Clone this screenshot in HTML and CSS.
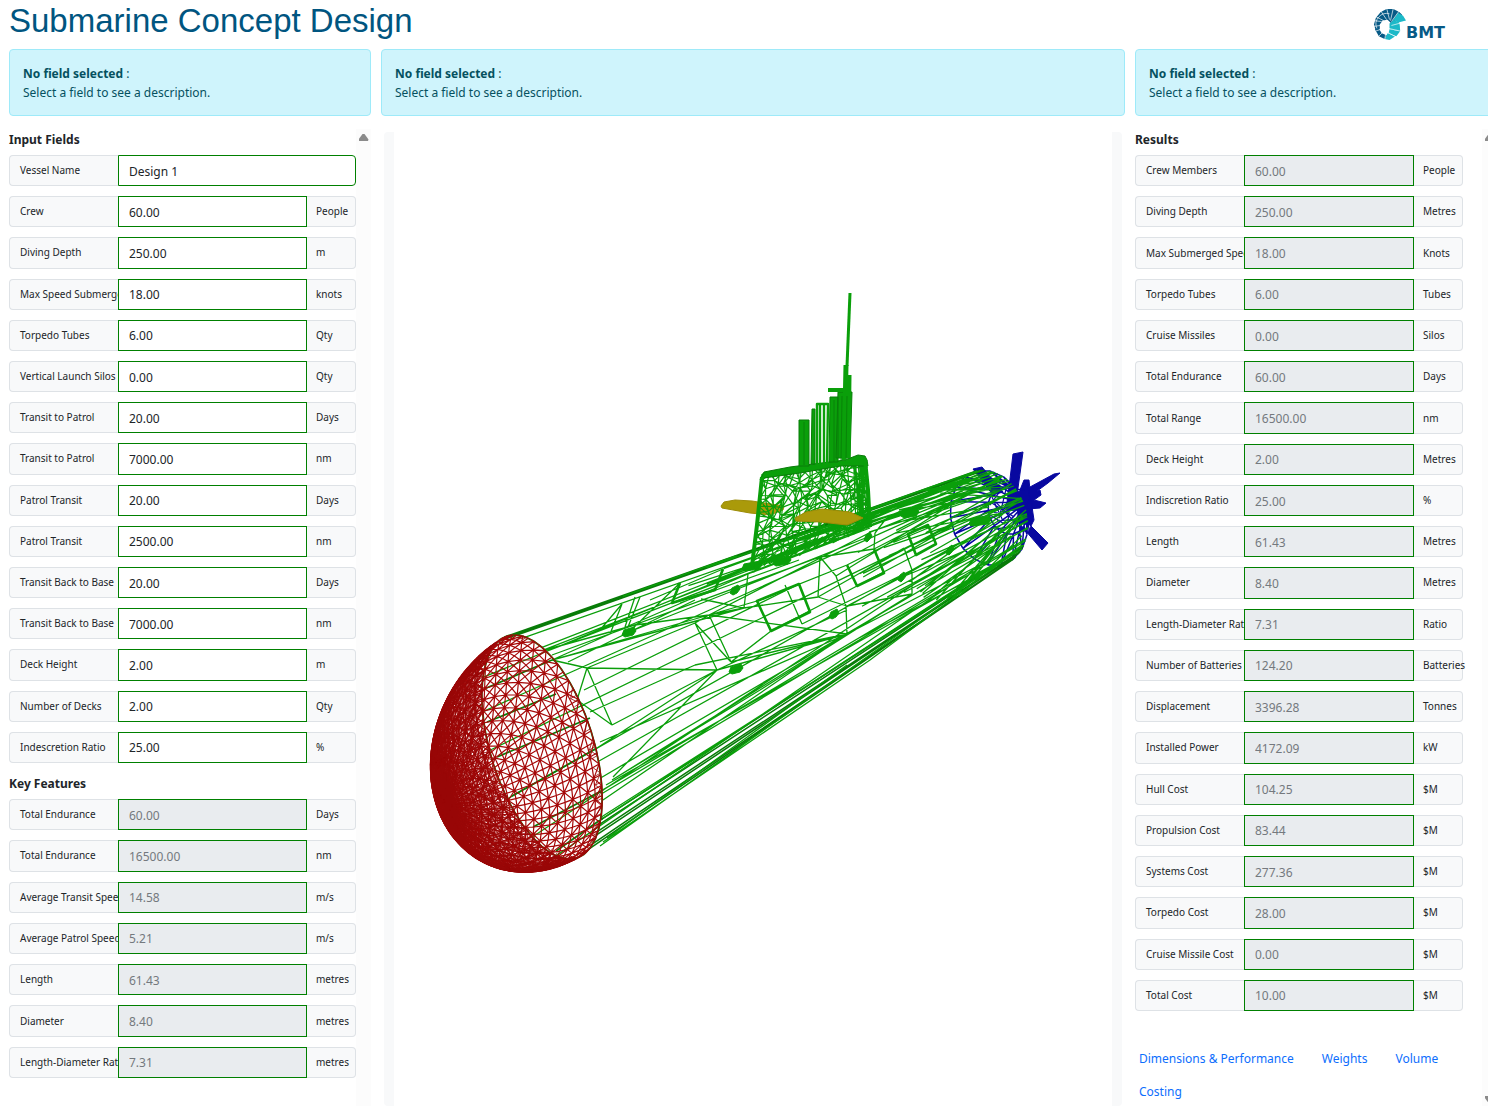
FILE: index.html
```html
<!DOCTYPE html>
<html lang="en">
<head>
<meta charset="utf-8">
<title>Submarine Concept Design</title>
<link rel="stylesheet" href="styles.css">
</head>
<body>
<header class="topbar">
  <h1>Submarine Concept Design</h1>
  <div class="logo">
    <svg class="logo-mark" viewBox="0 0 34 34" aria-hidden="true">
      <path d="M3 24 L1 17 L3 10 L8 4 L14 1 L21 1 L27 4 L30 7 L19 16 L15 12 L10 13 L7 17 L7 22 Z" fill="#075a86"/>
      <path d="M26 5 L31 8 L34 13 L26 15 L21 12 Z M21 13 L27 16 L28 23 L17 21 L17 16 Z M17 22 L28 24 L24 29 L16 26 Z" fill="#1cb9c8"/>
      <path d="M19 15 L21 12 L27 15 L28 24 L17 22 Z M15 26 L23 29 L17 33 L12 32 Z" fill="#1cb9c8"/>
      <path d="M2 22 L6 21 L9 26 L14 28 L12 32 L6 29 Z" fill="#075a86"/>
      <path d="M0 19 L8 18 M1 13 L9 14 M3 9 L11 13 M8 3 L14 12 M14 0 L17 12 M21 0 L18 13 M27 3 L19 14 M34 14 L19 18 M29 24 L16 21 M24 30 L15 25 M2 24 L8 22 M6 29 L10 25 M12 33 L13 27 M4 21 A11 11 0 0 1 17 6" fill="none" stroke="#fff" stroke-width=".7"/>
    </svg>
    <span class="logo-name">BMT</span>
  </div>
</header>
<main class="columns">
  <div class="alert"><strong>No field selected</strong> :<br>Select a field to see a description.</div>
  <div class="alert"><strong>No field selected</strong> :<br>Select a field to see a description.</div>
  <div class="alert"><strong>No field selected</strong> :<br>Select a field to see a description.</div>

  <section class="panel">
    <form class="panel-body">
      <h2>Input Fields</h2>
      <div class="fields fields-input" id="inputs"></div>
      <h2 class="spaced">Key Features</h2>
      <div class="fields fields-key" id="features"></div>
    </form>
    <div class="track"><span class="arrow-up"></span></div>
  </section>

  <section class="viewer">
    <svg id="model" viewBox="394 132 718 974" preserveAspectRatio="xMidYMin meet" role="img" aria-label="Submarine wireframe"></svg>
  </section>

  <section class="panel panel-results">
    <form class="panel-body">
      <h2>Results</h2>
      <div class="fields fields-results" id="results"></div>
      <nav class="tabs">
        <a href="#dimensions">Dimensions &amp; Performance</a>
        <a href="#weights">Weights</a>
        <a href="#volume">Volume</a>
        <a href="#costing">Costing</a>
      </nav>
    </form>
    <div class="track"><span class="arrow-up"></span><span class="arrow-down"></span></div>
  </section>
</main>
<script src="script.js"></script>
</body>
</html>
```
FILE: styles.css
```css
* { box-sizing: border-box; }
html, body { height: 100%; }
body {
  margin: 0;
  display: flex;
  flex-direction: column;
  overflow: hidden;
  background: #fff;
  color: #212529;
  font: 12px/19px "Noto Sans", "Open Sans", sans-serif;
}
.topbar {
  display: flex;
  justify-content: space-between;
  align-items: flex-start;
  height: 49px;
  padding: 0 43px 0 9px;
}
h1 {
  margin: 0;
  color: #005580;
  font: 400 33px/41px "Liberation Sans", Arial, sans-serif;
}
.logo { display: flex; align-items: flex-end; padding-top: 8px; }
.logo-mark { width: 33px; height: 33px; }
.logo-name {
  margin-bottom: -1px;
  color: #075a86;
  font: 700 16px/18px "DejaVu Sans", sans-serif;
}
.columns {
  flex: 1;
  min-height: 0;
  display: grid;
  grid-template-columns: minmax(0, 362fr) minmax(0, 744fr) minmax(0, 362fr);
  grid-template-rows: auto minmax(0, 1fr);
  gap: 13px 10px;
  width: calc(100% + 9px);
  padding-left: 9px;
}
.alert {
  padding: 14px 13px 13px;
  border: 1px solid #9eeaf9;
  border-radius: 4px;
  background: #cff4fc;
  color: #055160;
}
.panel { display: flex; min-height: 0; }
.panel-body { flex: 1; min-width: 0; }
.panel-results .panel-body { padding-right: 19px; }
.track {
  display: flex;
  flex-direction: column;
  justify-content: space-between;
  align-items: center;
  width: 15px;
  padding: 5px 0 3px;
  background: #fcfcfc;
}
.arrow-up, .arrow-down {
  width: 10px;
  height: 7px;
  background: #8b8b8b;
  clip-path: polygon(40% 0, 60% 0, 100% 80%, 95% 100%, 5% 100%, 0 80%);
}
.arrow-down { clip-path: polygon(5% 0, 95% 0, 100% 20%, 60% 100%, 40% 100%, 0 20%); }
h2 { margin: 0 0 5px; font-size: 12px; line-height: 21px; font-weight: 700; }
h2.spaced { margin-top: 10px; }
.fields { display: grid; grid-template-columns: minmax(0, 1fr); grid-auto-rows: 1fr; gap: 10px; }
.fields-input { min-height: 608px; }
.fields-key { min-height: 279px; }
.fields-results { min-height: 856px; }
.field { display: flex; }
.field label, .unit {
  display: flex;
  flex: none;
  align-items: center;
  border: 1px solid #dee2e6;
  background: #f8f9fa;
  font-size: 10px;
  white-space: nowrap;
}
.field label {
  width: 109px;
  padding-left: 10px;
  border-right: 0;
  border-radius: 4px 0 0 4px;
  overflow: hidden;
}
.unit { width: 49px; padding-left: 9px; border-left: 0; border-radius: 0 4px 4px 0; }
.field input {
  flex: 1;
  min-width: 0;
  padding: 1px 10px 0;
  border: 1px solid #008000;
  border-radius: 0;
  background: #fff;
  color: #212529;
  font: inherit;
}
.field input:last-child { border-radius: 0 4px 4px 0; }
.field input:disabled { background: #e9ecef; color: #74797e; }
.viewer {
  display: flex;
  min-height: 0;
  margin: 3px 3px 0;
  padding: 0 10px;
  border-radius: 4px;
  background: #f8f9fa;
}
.viewer svg { flex: 1; min-width: 0; background: #fff; }
.tabs { display: flex; flex-wrap: wrap; column-gap: 28px; margin-top: 31px; padding-left: 4px; }
.tabs a { padding: 7px 0; color: #0d6efd; text-decoration: none; }
```
FILE: script.js
```js
const inputs = [
  ["Vessel Name", "Design 1", ""], ["Crew", "60.00", "People"], ["Diving Depth", "250.00", "m"],
  ["Max Speed Submerged", "18.00", "knots"], ["Torpedo Tubes", "6.00", "Qty"], ["Vertical Launch Silos", "0.00", "Qty"],
  ["Transit to Patrol", "20.00", "Days"], ["Transit to Patrol", "7000.00", "nm"], ["Patrol Transit", "20.00", "Days"],
  ["Patrol Transit", "2500.00", "nm"], ["Transit Back to Base", "20.00", "Days"], ["Transit Back to Base", "7000.00", "nm"],
  ["Deck Height", "2.00", "m"], ["Number of Decks", "2.00", "Qty"], ["Indescretion Ratio", "25.00", "%"]
];
const features = [
  ["Total Endurance", "60.00", "Days"], ["Total Endurance", "16500.00", "nm"], ["Average Transit Speed", "14.58", "m/s"],
  ["Average Patrol Speed", "5.21", "m/s"], ["Length", "61.43", "metres"], ["Diameter", "8.40", "metres"],
  ["Length-Diameter Ratio", "7.31", "metres"]
];
const results = [
  ["Crew Members", "60.00", "People"], ["Diving Depth", "250.00", "Metres"], ["Max Submerged Speed", "18.00", "Knots"],
  ["Torpedo Tubes", "6.00", "Tubes"], ["Cruise Missiles", "0.00", "Silos"], ["Total Endurance", "60.00", "Days"],
  ["Total Range", "16500.00", "nm"], ["Deck Height", "2.00", "Metres"], ["Indiscretion Ratio", "25.00", "%"],
  ["Length", "61.43", "Metres"], ["Diameter", "8.40", "Metres"], ["Length-Diameter Ratio", "7.31", "Ratio"],
  ["Number of Batteries", "124.20", "Batteries"], ["Displacement", "3396.28", "Tonnes"], ["Installed Power", "4172.09", "kW"],
  ["Hull Cost", "104.25", "$M"], ["Propulsion Cost", "83.44", "$M"], ["Systems Cost", "277.36", "$M"],
  ["Torpedo Cost", "28.00", "$M"], ["Cruise Missile Cost", "0.00", "$M"], ["Total Cost", "10.00", "$M"]
];
function fill(id, rows, locked) {
  document.getElementById(id).innerHTML = rows.map(([name, value, unit], i) =>
    `<div class="field"><label for="${id}-${i}">${name}</label>` +
    `<input type="text" id="${id}-${i}" value="${value}"${locked ? " disabled" : ""}>` +
    (unit ? `<span class="unit">${unit}</span>` : "") + `</div>`).join("");
}
fill("inputs", inputs, false);
fill("features", features, true);
fill("results", results, true);

/* Wireframe model */
const svg = document.getElementById("model");
let seed = 11;
const rnd = () => (seed = (seed * 16807) % 2147483647) / 2147483647;
const pt = p => p[0].toFixed(1) + " " + p[1].toFixed(1);
const mix = (a, b, t) => [a[0] + (b[0] - a[0]) * t, a[1] + (b[1] - a[1]) * t];
const seg = (a, b) => "M" + pt(a) + "L" + pt(b);
function draw(d, stroke, width, fillColor) {
  const p = document.createElementNS("http://www.w3.org/2000/svg", "path");
  p.setAttribute("d", d);
  p.setAttribute("fill", fillColor || "none");
  p.setAttribute("stroke", stroke);
  p.setAttribute("stroke-width", width);
  p.setAttribute("stroke-linejoin", "round");
  svg.appendChild(p);
}
const GREEN = "#0a9f0a", DEEP = "#087c08", BLUE = "#0808a0", RED = "#a50808";
const bow = a => [542 + 35 * Math.cos(a) + 49 * Math.sin(a), 747 + 111 * Math.cos(a) - 16 * Math.sin(a)];
const stern = a => [989 + 12 * Math.cos(a) + 37 * Math.sin(a), 518 + 47 * Math.cos(a) - 8 * Math.sin(a)];
const hull = (a, t) => mix(bow(a), stern(a), t);

/* stern cage in blue */
let d = "";
for (let i = 0; i < 18; i++) {
  const a = i * Math.PI / 9, step = Math.PI / 9;
  const r = mix(stern(a), [1026, 503], .5), q = mix(stern(a + step), [1026, 503], .5);
  d += seg(stern(a), stern(a + step)) + seg(stern(a), r) + seg(r, q) + seg(r, stern(a + step)) + seg(r, [1026, 503]);
}
draw(d, BLUE, 1.5);
draw("M1013 454L1023 452L1018 488L1016 510L1006 510L1009 487ZM1060 473L1048 483L1033 494L1026 497L1030 487L1054 474ZM1046 503L1040 508L1028 509L1030 499ZM1019 523L1042 550L1048 543L1030 525ZM973 469L982 467L1003 492L993 495ZM1024 480L1029 480L1031 500L1034 520L1028 532L1020 530L1016 500ZM1030 494L1040 490L1041 495L1030 503Z", BLUE, 1, BLUE);
d = "";
for (let i = 0; i < 22; i++) d += seg([990 + rnd() * 42, 485 + rnd() * 45], [990 + rnd() * 42, 485 + rnd() * 45]);
draw(d, BLUE, 1.2);

/* long hull stringers */
d = "";
for (const a of [2.95, 3.0, 3.05, 3.14, 3.2, 3.27, 3.35]) d += seg(hull(a, 0), hull(a, 1));
for (const a of [.05, .14, .28, .33, .42, .47]) d += seg(hull(a + .25, 0), hull(a + .3, 1));
draw(d, DEEP, 1.5);
d = "";
for (const [a, b] of [[2.45, 2.5], [2.48, 2.6], [2.52, 2.75], [2.8, 2.7], [3.9, 3.7], [4.25, 4.2], [4.6, 4.7], [5.05, 5.1], [5.5, 5.3], [5.9, 5.8], [1.0, .9], [1.03, .95], [1.15, 1.2], [1.3, 1.35], [.72, .8], [.75, .7]])
  d += seg(hull(a, 0), hull(b, 1));
for (const l of [
  [552,660,610,634,748,574,870,528], [552,660,709,615,871,532,1000,480], [552,660,744,608], [552,655,820,557], [545,650,635,625,709,615],
  [587,668,717,670,612,725], [552,660,587,668,612,725,577,700,587,668], [695,623,717,670], [695,623,731,662,709,615,695,623],
  [717,670,613,777], [731,662,847,634,717,670], [709,615,847,634], [785,585,802,624], [820,557,818,597], [820,557,836,576,846,606,847,634],
  [748,574,744,608,709,615], [701,599,744,608], [904,548,912,570,912,594,847,606], [874,549,875,533,885,520], [635,597,625,627], [622,604,610,634],
  [600,630,622,604], [640,597,628,627], [587,668,695,623], [568,662,695,600], [584,690,799,584], [590,712,695,665,847,634], [597,748,717,670,847,610],
  [600,742,847,634,912,594], [603,800,847,634,1018,545], [612,780,760,690,912,594], [612,780,847,634], [606,785,1010,556], [600,846,912,625,1022,545],
  [603,842,870,660,1015,552], [607,838,750,735,847,665], [629,632,735,590,868,537], [629,632,680,583], [680,603,799,560], [650,600,723,569],
  [709,615,757,601,847,565,908,534], [731,662,771,631,857,586,916,555], [744,608,818,597,904,548], [820,557,874,549,950,510], [818,597,847,606],
  [847,606,902,577,1000,520], [834,614,912,570,990,530], [836,576,975,490], [802,624,912,570]]) {
  for (let i = 0; i + 3 < l.length; i += 2) d += seg([l[i], l[i + 1]], [l[i + 2], l[i + 3]]);
}
for (let i = 0; i < 36; i++) {
  const a = 1 + rnd() * 2.1 , t = .6 + rnd() * .2;
  d += seg(hull(a, t), hull(a + (rnd() - .5) * .7, Math.min(1, t + .2 + rnd() * .25)));
}
for (let i = 0; i < 26; i++) {
  const a = rnd() * 6.28;
  d += seg(hull(a, .88), mix(stern(a + rnd() - .5), [1024, 505], rnd() * .8));
}
for (let i = 0; i < 14; i++) {
  const a = 2.5 + rnd() * .6, t = rnd() * .5 + .2;
  d += seg(hull(a, t), hull(a + (rnd() - .5) * .25, t + .25));
}
draw(d, GREEN, 1.3);
draw("M757 601L799 584L810 612L771 631ZM847 565L857 586L884 573L874 549M908 534L916 555L936 544L928 525ZM680 583L672 603L715 590L723 569", GREEN, 2.6);
for (const [x, y, w] of [[629,632,7], [735,590,5], [736,669,7], [834,614,5], [902,577,4], [868,537,4], [950,550,4], [910,513,9], [980,521,11], [752,566,10], [782,561,9]])
  draw(`M${x - w} ${y + 3}L${x - w + 2} ${y - 2}L${x + w - 2} ${y - 5}L${x + w} ${y - 1}L${x + w - 3} ${y + 3}L${x - w + 3} ${y + 5}Z`, GREEN, 1, GREEN);

/* sail */
draw("M721 506L724 502L735 500L752 501L784 506L783 510L770 515L750 513L722 508Z", "#9c8c08", 1, "#aa9a0a");
const sail = (u, v) => mix(mix([762, 474], [867, 460], u), mix([752, 570], [871, 527], u), v);
d = "";
for (const [nx, ny] of [[13, 8], [9, 11]]) {
  const g = [];
  for (let j = 0; j <= ny; j++) {
    g.push([]);
    for (let i = 0; i <= nx; i++) {
      const u = i / nx + (i % nx ? (rnd() - .5) * .07 : 0), v = j / ny + (j % ny ? (rnd() - .5) * .09 : 0);
      g[j].push(sail(u, v));
    }
  }
  for (let j = 0; j < ny; j++) for (let i = 0; i < nx; i++) {
    d += seg(g[j][i], g[j + 1][i]);
    if (rnd() > .35) d += seg(g[j][i], g[j][i + 1]);
    d += rnd() > .5 ? seg(g[j][i], g[j + 1][i + 1]) : seg(g[j][i + 1], g[j + 1][i]);
  }
}
for (let i = 0; i < 16; i++) d += seg(sail(.86 + rnd() * .14, 0), sail(.86 + rnd() * .14, 1));
for (let i = 0; i < 30; i++) {
  const u = rnd() * .9;
  d += seg(sail(u, .92 + rnd() * .12), sail(u + .1, .88 + rnd() * .12));
}
draw(d, GREEN, 1.2);
draw("M760 480L764 472L790 467L845 460L858 455L865 456L867 460L868 466L840 466L800 473L764 478Z", DEEP, 1, GREEN);
draw("M762 477L757 525L752 566M865 460L868 490L870 527", GREEN, 4);
draw("M799 420H809V466H799ZM812 409H815V464H811ZM830 397H838V462H829ZM838 392H852L850 458H836Z", DEEP, 1, GREEN);
draw("M817 464L817 404H828L827 464M820 404V464M824 404V464", GREEN, 2.4);
draw("M828 390H846", GREEN, 4);
draw("M846 365L844 460M849 375L848 458", GREEN, 5);
draw("M850 293L847 366", GREEN, 3);
draw("M804 422V465M834 400V462M842 396L841 460M847 396L846 458", DEEP, .8);
draw("M795 518L806 512L822 509L850 512L863 518L852 523L847 525L820 522L796 521Z", "#9c8c08", 1, "#aa9a0a");

/* bow dome in red */
const dome = (a, f) => {
  const p = bow(a), c = Math.cos(f), s = Math.sin(f);
  return [542 + (p[0] - 542) * c - 94 * s, 747 + (p[1] - 747) * c + 56 * s];
};
/* true when a point is seen through the open rim */
const inRim = ([x, y]) => {
  const k = 35 * -16 - 49 * 111, X = x - 542, Y = y - 747;
  const p = (X * -16 - Y * 49) / k, q = (Y * 35 - X * 111) / k;
  return p * p + q * q < 1;
};
function mesh(n, m, keep) {
  let path = "";
  for (let j = 0; j < m; j++) for (let i = 0; i < n; i++) {
    const a = i * 2 * Math.PI / n, b = (i + 1) * 2 * Math.PI / n;
    const f = j * Math.PI / 2 / m, g = (j + 1) * Math.PI / 2 / m;
    if (!keep(dome(a, f))) continue;
    path += seg(dome(a, f), dome(b, f)) + seg(dome(a, f), dome(a, g));
    path += (i + j) % 2 ? seg(dome(a, f), dome(b, g)) : seg(dome(b, f), dome(a, g));
  }
  return path;
}
d = "";
for (let i = 0; i < 40; i++) d += seg(bow(i * Math.PI / 20), bow((i + 1) * Math.PI / 20));
for (const [x, y, u, v] of [[484,689,552,660], [487,722,556,694], [497,757,590,718], [512,796,597,748], [533,827,603,790], [556,851,603,818]])
  d += seg([x, y], [u, v]);
draw(d, DEEP, 1.8);
draw(mesh(64, 22, () => true), RED, 1.2);
draw(mesh(79, 25, p => !inRim(p)), "#980606", .8);
```
